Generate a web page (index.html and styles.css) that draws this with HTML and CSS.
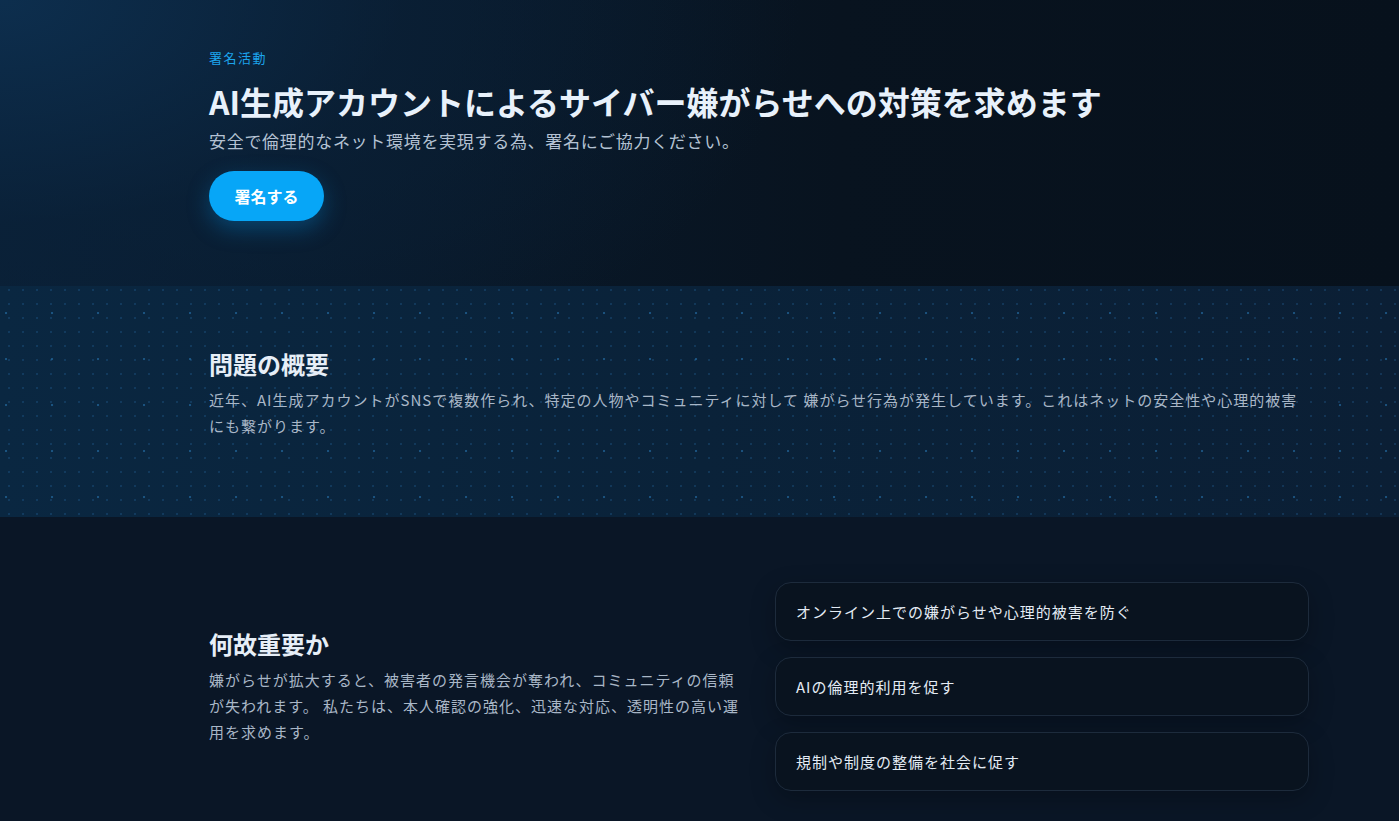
FILE: index.html
```html
<!DOCTYPE html>
<html lang="ja">
<head>
<meta charset="utf-8">
<title>署名活動</title>
<link rel="stylesheet" href="styles.css">
</head>
<body>
<section class="hero">
  <div class="container">
    <p class="eyebrow">署名活動</p>
    <h1 class="hero-title">AI生成アカウントによるサイバー嫌がらせへの対策を求めます</h1>
    <p class="hero-sub">安全で倫理的なネット環境を実現する為、署名にご協力ください。</p>
    <a class="btn" href="#">署名する</a>
  </div>
</section>
<section class="overview">
  <div class="container">
    <h2 class="section-title">問題の概要</h2>
    <p class="section-text">近年、AI生成アカウントがSNSで複数作られ、特定の人物やコミュニティに対して 嫌がらせ行為が発生しています。これはネットの安全性や心理的被害にも繋がります。</p>
  </div>
</section>
<section class="why">
  <div class="container why-grid">
    <div class="why-text">
      <h2 class="section-title">何故重要か</h2>
      <p class="section-text">嫌がらせが拡大すると、被害者の発言機会が奪われ、コミュニティの信頼が失われます。 私たちは、本人確認の強化、迅速な対応、透明性の高い運用を求めます。</p>
    </div>
    <ul class="cards">
      <li class="card">オンライン上での嫌がらせや心理的被害を防ぐ</li>
      <li class="card">AIの倫理的利用を促す</li>
      <li class="card">規制や制度の整備を社会に促す</li>
    </ul>
  </div>
</section>
</body>
</html>
```
FILE: styles.css
```css
* { box-sizing: border-box; }
html, body { margin: 0; padding: 0; }
body {
  font-family: "Noto Sans CJK JP", "Noto Sans", sans-serif;
  background: #0a1524;
  color: #e6eef7;
  -webkit-font-smoothing: antialiased;
}
.container {
  width: 1100px;
  margin-left: 209px;
}
.hero {
  height: 286px;
  padding-top: 48px;
  background:
    radial-gradient(ellipse 1000px 560px at 0% 0%, rgba(13, 47, 79, 0.95) 0%, rgba(10, 34, 58, 0.6) 40%, rgba(8, 20, 34, 0) 80%),
    linear-gradient(90deg, #0a1f35 0%, #08131f 60%, #07111c 100%);
}
.eyebrow {
  margin: 0;
  font-size: 13px;
  line-height: 20px;
  color: #1ca4ec;
  letter-spacing: 1.5px;
}
.hero-title {
  margin: 12px 0 0;
  font-size: 32px;
  line-height: 42px;
  font-weight: 700;
  color: #e8f1fb;
  letter-spacing: 0;
}
.hero-sub {
  margin: 6px 0 0;
  font-size: 17px;
  line-height: 26px;
  color: #b4c2d3;
  letter-spacing: 0.7px;
}
.btn {
  display: inline-flex;
  align-items: center;
  justify-content: center;
  margin-top: 17px;
  width: 115px;
  height: 50px;
  border-radius: 25px;
  background: #07a6f7;
  color: #fff;
  font-weight: 700;
  font-size: 16px;
  text-decoration: none;
  box-shadow: 0 8px 22px rgba(7, 140, 220, 0.35);
}
.overview {
  height: 231px;
  padding-top: 62px;
  background-color: #0a2239;
  background-image:
    radial-gradient(circle at 1px 1px, rgba(40, 120, 180, 0.55) 1px, transparent 1.6px),
    radial-gradient(circle at 1px 1px, rgba(40, 110, 170, 0.28) 1px, transparent 1.5px),
    linear-gradient(90deg, #0a2741 0%, #0a2239 50%, #0b1f35 100%);
  background-size: 46px 46px, 14px 14px, 100% 100%;
  background-position: 5px 26px, 8px 3px, 0 0;
}
.section-title {
  margin: 0;
  font-size: 24px;
  line-height: 32px;
  font-weight: 700;
  color: #e6eef7;
}
.section-text {
  margin: 7px 0 0;
  font-size: 15px;
  line-height: 26px;
  color: #a9b7c7;
  letter-spacing: 1px;
}
.why {
  padding: 65px 0 40px;
  background: #0a1626;
}
.why-grid {
  display: grid;
  grid-template-columns: 1fr 1fr;
  gap: 32px;
  align-items: center;
}
.cards {
  list-style: none;
  margin: 0;
  padding: 0;
  display: flex;
  flex-direction: column;
  gap: 16px;
}
.card {
  height: 59px;
  display: flex;
  align-items: center;
  padding: 0 20px;
  border: 1px solid #1d2b3c;
  border-radius: 16px;
  background: #09131f;
  font-size: 15px;
  color: #e3ebf4;
  letter-spacing: 1px;
  box-shadow: 0 8px 24px rgba(0, 0, 0, 0.25);
}
```
